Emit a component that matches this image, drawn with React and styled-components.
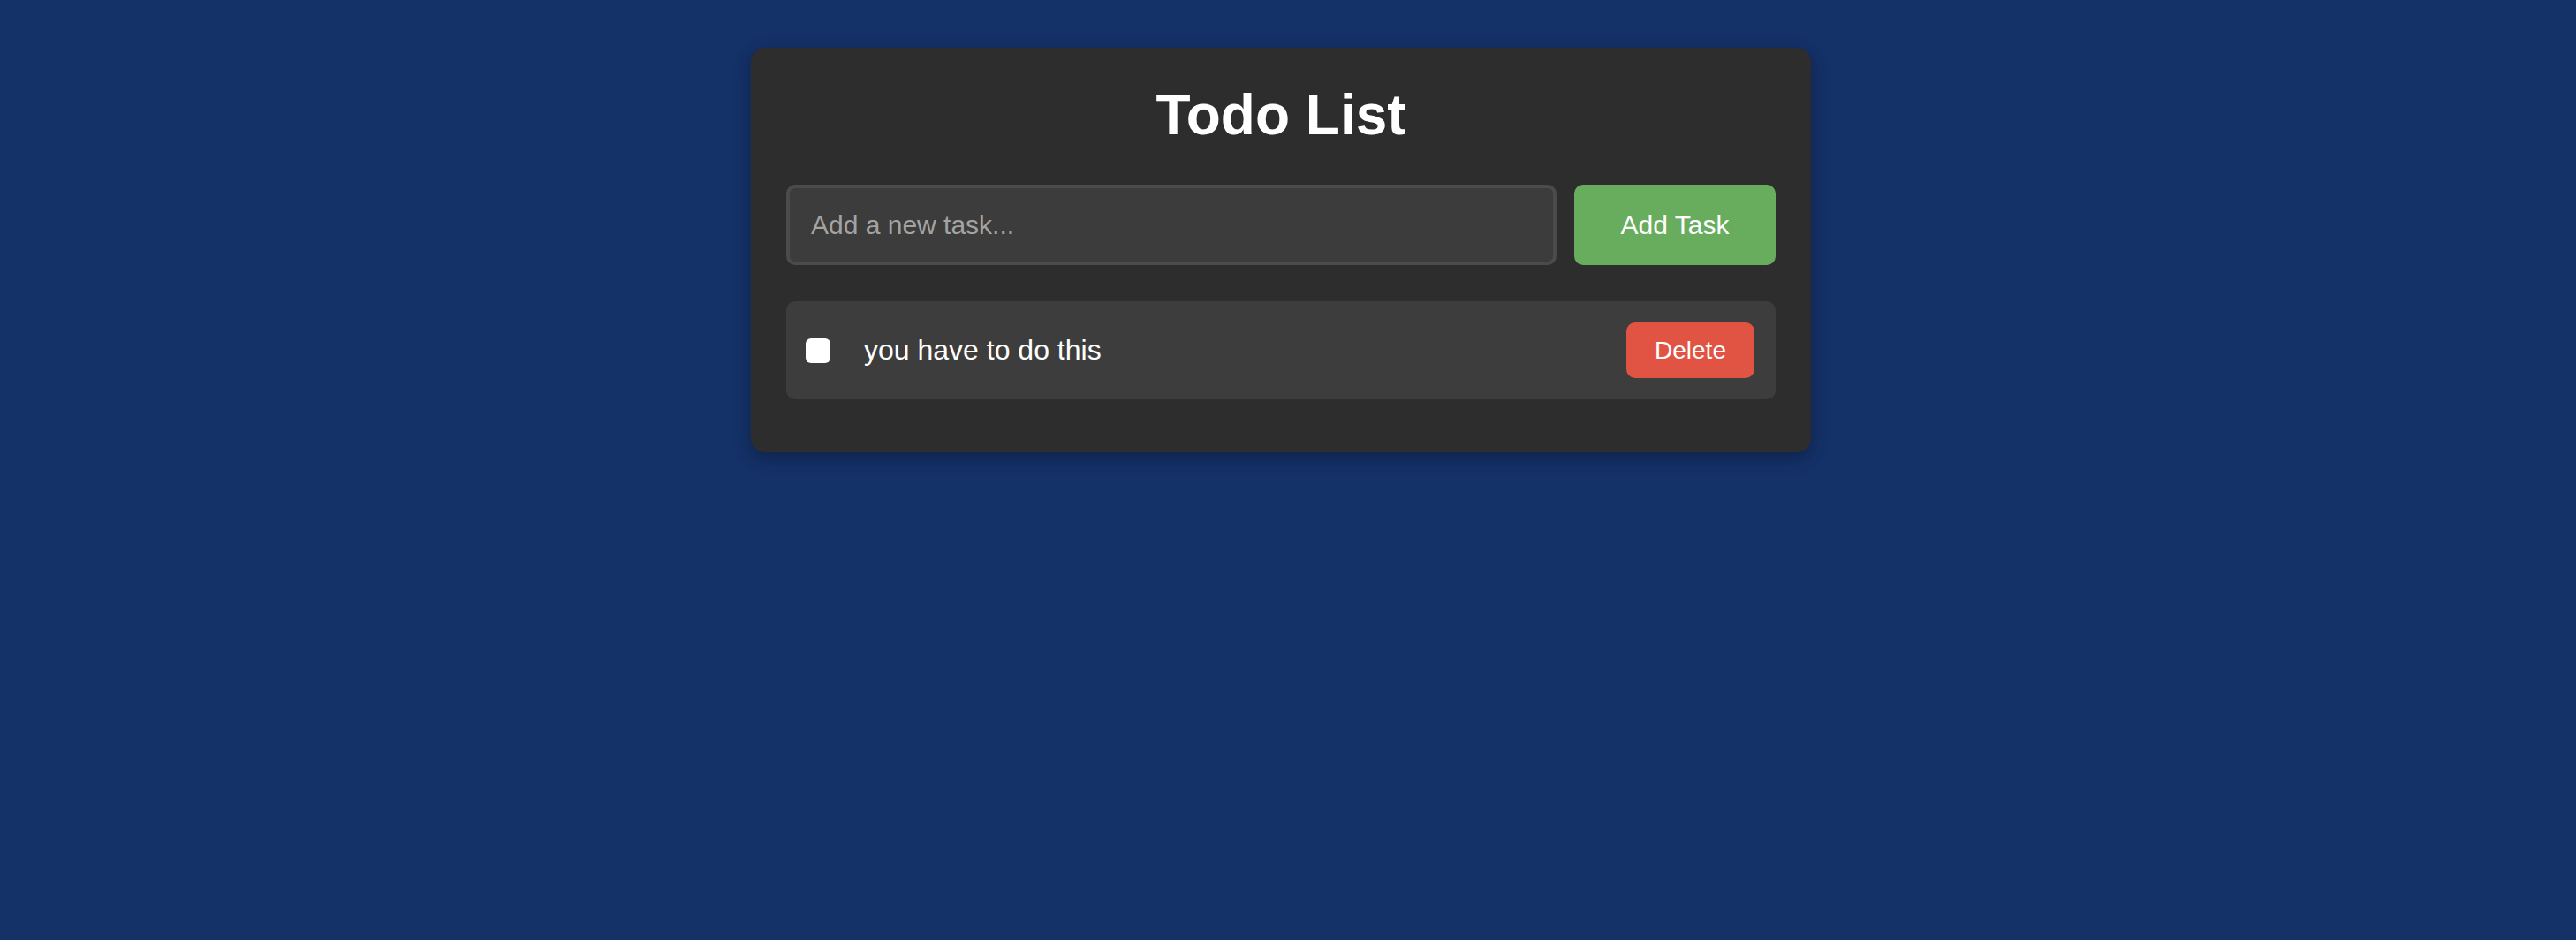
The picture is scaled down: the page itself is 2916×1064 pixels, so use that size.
import React, { useState } from 'react'
import styled, { createGlobalStyle } from 'styled-components'

const GlobalStyle = createGlobalStyle`
  body {
    margin: 0;
    background-color: #143168;
    font-family: "Liberation Sans", Arial, sans-serif;
  }
`

const App = () => {
  const [todos, setTodos] = useState([
    { id: 1, text: 'you have to do this', done: false },
  ])
  const [value, setValue] = useState('')

  const handleAdd = () => {
    if (!value.trim()) return
    setTodos((prev) => [...prev, { id: Date.now(), text: value, done: false }])
    setValue('')
  }

  const toggle = (id) => {
    setTodos((prev) => prev.map((t) => (t.id == id ? { ...t, done: !t.done } : t)))
  }

  const remove = (id) => {
    setTodos((prev) => prev.filter((t) => t.id != id))
  }

  return (
    <>
      <GlobalStyle />
      <Page>
        <Card>
          <Title>Todo List</Title>
          <InputRow>
            <TaskInput
              placeholder="Add a new task..."
              value={value}
              onChange={(e) => setValue(e.target.value)}
            />
            <AddButton onClick={handleAdd}>Add Task</AddButton>
          </InputRow>
          {todos.map((todo) => (
            <Item key={todo.id}>
              <Check
                type="checkbox"
                checked={todo.done}
                onChange={() => toggle(todo.id)}
              />
              <Text $done={todo.done}>{todo.text}</Text>
              <DeleteButton onClick={() => remove(todo.id)}>Delete</DeleteButton>
            </Item>
          ))}
        </Card>
      </Page>
    </>
  )
}

export default App

const Page = styled.div`
  min-height: 100vh;
  padding: 54px 16px 0 0;
  box-sizing: border-box;
`

const Card = styled.div`
  width: 1200px;
  margin: 0 auto;
  box-sizing: border-box;
  padding: 40px;
  background-color: #2d2d2d;
  border-radius: 16px;
  box-shadow: 0 6px 20px rgba(0, 0, 0, 0.3);
`

const Title = styled.h1`
  margin: 0 0 43px;
  text-align: center;
  color: #ffffff;
  font-size: 64px;
  line-height: 72px;
  font-weight: 700;
`

const InputRow = styled.div`
  display: flex;
  gap: 20px;
  height: 91px;
  margin-bottom: 41px;
`

const TaskInput = styled.input`
  flex: 1;
  box-sizing: border-box;
  padding: 0 24px;
  background-color: #3c3c3c;
  border: 4px solid #4b4b4b;
  border-radius: 10px;
  color: #ffffff;
  font-family: "Liberation Sans", Arial, sans-serif;
  font-size: 30px;
  outline: none;

  &::placeholder {
    color: #a3a3a3;
  }
`

const AddButton = styled.button`
  width: 228px;
  border: none;
  border-radius: 10px;
  background-color: #68ad5e;
  color: #ffffff;
  font-family: "Liberation Sans", Arial, sans-serif;
  font-size: 30px;
  cursor: pointer;
`

const Item = styled.div`
  display: flex;
  align-items: center;
  height: 111px;
  box-sizing: border-box;
  padding: 0 24px 0 22px;
  margin-bottom: 20px;
  background-color: #3d3d3d;
  border-radius: 10px;
`

const Check = styled.input`
  appearance: none;
  width: 28px;
  height: 28px;
  margin: 0;
  background-color: #ffffff;
  border-radius: 6px;
  cursor: pointer;

  &:checked {
    background-color: #68ad5e;
  }
`

const Text = styled.span`
  flex: 1;
  margin-left: 38px;
  color: #ffffff;
  font-size: 32px;
  text-decoration: ${(props) => (props.$done ? 'line-through' : 'none')};
`

const DeleteButton = styled.button`
  width: 145px;
  height: 63px;
  border: none;
  border-radius: 10px;
  background-color: #e15443;
  color: #ffffff;
  font-family: "Liberation Sans", Arial, sans-serif;
  font-size: 28px;
  cursor: pointer;
`
